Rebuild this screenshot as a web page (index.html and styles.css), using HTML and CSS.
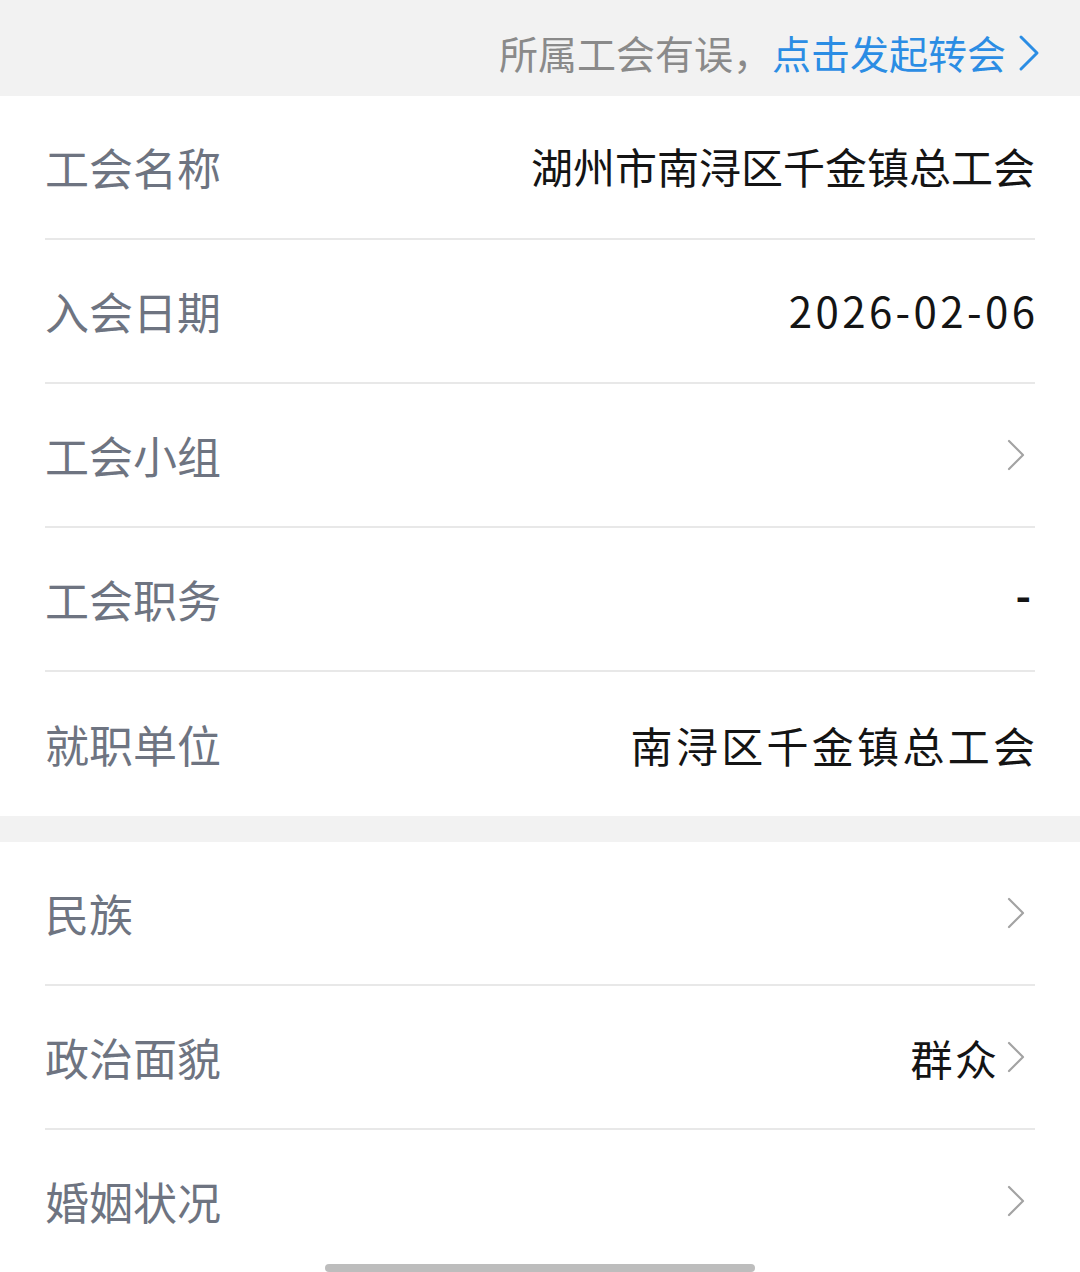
FILE: index.html
```html
<!DOCTYPE html>
<html lang="zh-CN">
<head>
<meta charset="utf-8">
<title>会员信息</title>
<link rel="stylesheet" href="styles.css">
</head>
<body>
<div class="page">
  <div class="notice">
    <span class="notice-gray">所属工会有误，</span><span class="notice-link">点击发起转会</span>
    <svg class="notice-arrow" width="22" height="38" viewBox="0 0 22 38"><path d="M3 3 L19 19 L3 35" fill="none" stroke="#2b8de4" stroke-width="3" stroke-linecap="round" stroke-linejoin="round"/></svg>
  </div>

  <div class="section">
    <div class="row"><div class="row-inner"><span class="label">工会名称</span><span class="value tight">湖州市南浔区千金镇总工会</span></div></div>
    <div class="row"><div class="row-inner"><span class="label">入会日期</span><span class="value date">2026-02-06</span></div></div>
    <div class="row"><div class="row-inner"><span class="label">工会小组</span><span class="value"><svg class="chev" width="18" height="32" viewBox="0 0 18 32"><path d="M2 2 L16 16 L2 30" fill="none" stroke="#a3a3a3" stroke-width="2.2" stroke-linecap="round" stroke-linejoin="round"/></svg></span></div></div>
    <div class="row"><div class="row-inner"><span class="label">工会职务</span><span class="value dash">-</span></div></div>
    <div class="row last"><div class="row-inner"><span class="label">就职单位</span><span class="value spaced wide">南浔区千金镇总工会</span></div></div>
  </div>

  <div class="gap"></div>

  <div class="section">
    <div class="row"><div class="row-inner"><span class="label">民族</span><span class="value"><svg class="chev" width="18" height="32" viewBox="0 0 18 32"><path d="M2 2 L16 16 L2 30" fill="none" stroke="#a3a3a3" stroke-width="2.2" stroke-linecap="round" stroke-linejoin="round"/></svg></span></div></div>
    <div class="row"><div class="row-inner"><span class="label">政治面貌</span><span class="value"><span class="spaced">群众</span><svg class="chev" width="18" height="32" viewBox="0 0 18 32"><path d="M2 2 L16 16 L2 30" fill="none" stroke="#a3a3a3" stroke-width="2.2" stroke-linecap="round" stroke-linejoin="round"/></svg></span></div></div>
    <div class="row"><div class="row-inner"><span class="label">婚姻状况</span><span class="value"><svg class="chev" width="18" height="32" viewBox="0 0 18 32"><path d="M2 2 L16 16 L2 30" fill="none" stroke="#a3a3a3" stroke-width="2.2" stroke-linecap="round" stroke-linejoin="round"/></svg></span></div></div>
  </div>
</div>
<div class="home-bar"></div>
</body>
</html>
```

FILE: styles.css
```css
html, body {
  margin: 0;
  padding: 0;
  background: #ffffff;
}
body {
  font-family: "Noto Sans CJK SC", "Noto Sans", sans-serif;
  width: 1080px;
  height: 1272px;
  overflow: hidden;
}
.page {
  display: flex;
  flex-direction: column;
}
.notice {
  height: 96px;
  background: #f2f2f2;
  display: flex;
  align-items: center;
  justify-content: flex-end;
  padding-right: 40px;
  padding-top: 8px;
  font-size: 39px;
  box-sizing: border-box;
}
.notice-gray {
  color: #8a8a8a;
}
.notice-link {
  color: #2b8de4;
}
.notice-arrow {
  margin-left: 12px;
  margin-top: 2px;
}
.section {
  background: #ffffff;
  display: flex;
  flex-direction: column;
}
.row {
  padding: 0 45px;
}
.row-inner {
  height: 144px;
  box-sizing: border-box;
  border-bottom: 2px solid #e8e8e8;
  display: flex;
  align-items: center;
  justify-content: space-between;
}
.row.last .row-inner {
  border-bottom: none;
}
.label {
  font-size: 44px;
  color: #6e7481;
}
.value {
  font-size: 42px;
  color: #141414;
  display: flex;
  align-items: center;
}
.value.tight {
  padding-bottom: 4px;
}
.value.spaced,
.spaced {
  letter-spacing: 2.6px;
  margin-right: -2.6px;
}
.value.wide {
  letter-spacing: 3.3px;
  margin-right: -3.3px;
}
.value.date {
  letter-spacing: 3.4px;
  margin-right: -3.4px;
  padding-bottom: 4px;
}
.value.dash {
  padding-right: 4px;
  padding-bottom: 12px;
  font-weight: 700;
}
.chev {
  margin-left: 10px;
  margin-right: 10px;
}
.gap {
  height: 26px;
  background: #f2f2f2;
}
.home-bar {
  position: fixed;
  left: 325px;
  bottom: 0;
  width: 430px;
  height: 8px;
  border-radius: 4px;
  background: #bdbdbd;
}
```
